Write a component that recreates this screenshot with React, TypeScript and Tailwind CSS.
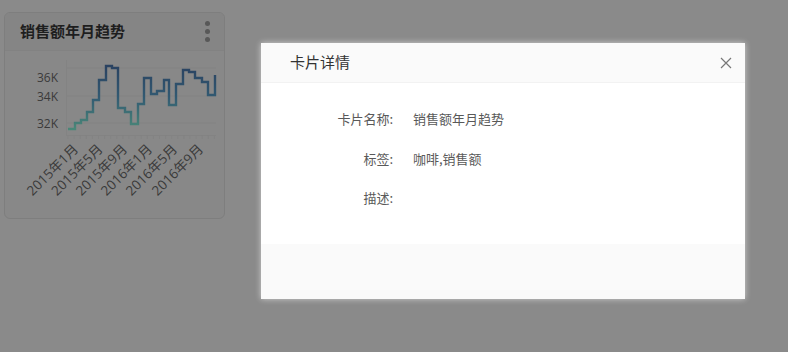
const pts: [number, number][] = [
  [68, 129], [75, 123], [81, 120], [87, 112], [93, 100], [99, 80], [106, 66], [112, 68],
  [118, 108], [125, 112], [131, 124], [138, 104], [144, 78], [151, 94], [157, 91], [164, 80],
  [169, 105], [176, 84], [183, 70], [189, 72], [195, 78], [202, 82], [208, 95],
];

const stepPath = () => {
  let d = `M${pts[0][0]},${pts[0][1]}`;
  for (let i = 1; i < pts.length; i++) {
    d += ` H${pts[i][0]} V${pts[i][1]}`;
  }
  d += ` H215 V75`;
  return d;
};

const xLabels = [
  { t: "2015年1月", x: 79 },
  { t: "2015年5月", x: 103.5 },
  { t: "2015年9月", x: 128 },
  { t: "2016年1月", x: 153 },
  { t: "2016年5月", x: 178 },
  { t: "2016年9月", x: 204 },
];

const TrendCard = () => (
  <div className="w-[221px] h-[207px] rounded-md border border-[#7e7e7e] bg-[#888888] overflow-hidden">
    <div className="h-[38px] flex items-center justify-between pl-[15px] pr-[14px] bg-[#858585] border-b border-[#828282]">
      <span className="text-[15px] font-semibold text-[#1e1e1e]">销售额年月趋势</span>
      <div className="flex flex-col gap-[3px]">
        <span className="w-[5px] h-[5px] rounded-full bg-[#585858]" />
        <span className="w-[5px] h-[5px] rounded-full bg-[#585858]" />
        <span className="w-[5px] h-[5px] rounded-full bg-[#585858]" />
      </div>
    </div>
    <svg width="221" height="168" viewBox="5 51 221 168" className="block">
      <defs>
        <linearGradient id="lg" x1="0" y1="66" x2="0" y2="129" gradientUnits="userSpaceOnUse">
          <stop offset="0" stopColor="#2a4261" />
          <stop offset="0.5" stopColor="#325a72" />
          <stop offset="1" stopColor="#4a8778" />
        </linearGradient>
      </defs>
      {[68, 96, 123].map((y) => (
        <line key={y} x1="66" x2="216" y1={y} y2={y} stroke="#828282" strokeWidth="1" />
      ))}
      <line x1="66.5" x2="66.5" y1="60" y2="135" stroke="#838383" />
      <line x1="66" x2="216" y1="135.5" y2="135.5" stroke="#838383" />
      {Array.from({ length: 25 }).map((_, i) => (
        <line key={i} x1={68 + i * 6.1} x2={68 + i * 6.1} y1="135" y2="139" stroke="#838383" />
      ))}
      <g fill="#3a3a3a" fontSize="12" fontFamily="'Open Sans','Noto Sans CJK SC',sans-serif" textAnchor="end">
        <text x="58" y="82">36K</text>
        <text x="58" y="101">34K</text>
        <text x="58" y="128">32K</text>
      </g>
      <g fill="#3a3a3a" fontSize="13.5" fontFamily="'Open Sans','Noto Sans CJK SC',sans-serif" textAnchor="end">
        {xLabels.map((l) => (
          <text key={l.t} x={l.x} y="150" transform={`rotate(-45 ${l.x} 150)`}>
            {l.t}
          </text>
        ))}
      </g>
      <path d={stepPath()} fill="none" stroke="url(#lg)" strokeWidth="2.4" />
    </svg>
  </div>
);

const Row = ({ label, value }: { label: string; value?: string }) => (
  <div className="flex items-center h-[20px] text-[13px] text-[#595959]">
    <span className="w-[132px] text-right">{label}</span>
    <span className="ml-[20px]">{value}</span>
  </div>
);

export default function App() {
  return (
    <div
      className="relative w-[788px] h-[352px] bg-[#8a8a8a] overflow-hidden pl-[4px] pt-[12px]"
      style={{ fontFamily: "'Open Sans','Noto Sans CJK SC',sans-serif" }}
    >
      <TrendCard />
      <div
        className="absolute left-[261px] top-[43px] w-[484px] h-[256px] bg-white flex flex-col shadow-[0_0_6px_rgba(255,255,255,0.6)]"
        style={{ fontFamily: "'Noto Sans CJK SC',sans-serif" }}
      >
        <div className="h-[40px] bg-[#fafafa] flex items-center justify-between pl-[29px] pr-[13px] border-b border-[#f2f2f2]">
          <span className="text-[15px] text-[#333333]">卡片详情</span>
          <svg width="12" height="12" viewBox="0 0 12 12">
            <path d="M1 1 L11 11 M11 1 L1 11" stroke="#777" strokeWidth="1.2" />
          </svg>
        </div>
        <div className="flex-1 flex flex-col gap-[19.5px] pt-[26px]">
          <Row label="卡片名称:" value="销售额年月趋势" />
          <Row label="标签:" value="咖啡,销售额" />
          <Row label="描述:" />
        </div>
        <div className="h-[55px] bg-[#fafafa]" />
      </div>
    </div>
  );
}
